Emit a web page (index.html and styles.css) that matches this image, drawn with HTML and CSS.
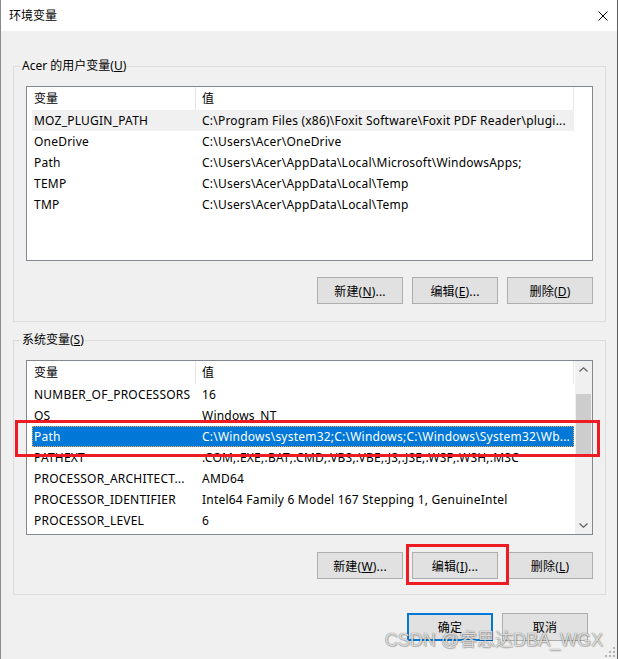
FILE: index.html
```html
<!DOCTYPE html>
<html lang="zh-CN">
<head>
    <meta charset="UTF-8">
    <title>环境变量</title>
    <link rel="stylesheet" href="styles.css">
</head>
<body>
    <div class="window">
        <div class="titlebar">
            <span class="title">环境变量</span>
            <svg class="close" width="10" height="10" viewBox="0 0 10 10">
                <path d="M0.5 0.5L9.5 9.5M9.5 0.5L0.5 9.5" stroke="#000" stroke-width="1" fill="none"/>
            </svg>
        </div>

        <div class="content">
            <fieldset class="group group-user">
                <legend>Acer 的用户变量(<u>U</u>)</legend>
                <div class="list">
                    <div class="list-main">
                        <div class="list-head"><span class="h1">变量</span><span class="h2">值</span></div>
                        <div class="row row-inactive"><span class="c1">MOZ_PLUGIN_PATH</span><span class="c2">C:\Program Files (x86)\Foxit Software\Foxit PDF Reader\plugi...</span></div>
                        <div class="row"><span class="c1">OneDrive</span><span class="c2">C:\Users\Acer\OneDrive</span></div>
                        <div class="row"><span class="c1">Path</span><span class="c2">C:\Users\Acer\AppData\Local\Microsoft\WindowsApps;</span></div>
                        <div class="row"><span class="c1">TEMP</span><span class="c2">C:\Users\Acer\AppData\Local\Temp</span></div>
                        <div class="row"><span class="c1">TMP</span><span class="c2">C:\Users\Acer\AppData\Local\Temp</span></div>
                    </div>
                </div>
                <div class="buttons">
                    <button class="btn">新建(<u>N</u>)...</button>
                    <button class="btn">编辑(<u>E</u>)...</button>
                    <button class="btn">删除(<u>D</u>)</button>
                </div>
            </fieldset>

            <fieldset class="group group-system">
                <legend>系统变量(<u>S</u>)</legend>
                <div class="list">
                    <div class="list-main">
                        <div class="list-head"><span class="h1">变量</span><span class="h2">值</span></div>
                        <div class="row"><span class="c1">NUMBER_OF_PROCESSORS</span><span class="c2">16</span></div>
                        <div class="row"><span class="c1">OS</span><span class="c2">Windows_NT</span></div>
                        <div class="row row-selected"><span class="c1">Path</span><span class="c2">C:\Windows\system32;C:\Windows;C:\Windows\System32\Wb...</span></div>
                        <div class="row"><span class="c1">PATHEXT</span><span class="c2">.COM;.EXE;.BAT;.CMD;.VBS;.VBE;.JS;.JSE;.WSF;.WSH;.MSC</span></div>
                        <div class="row"><span class="c1">PROCESSOR_ARCHITECT...</span><span class="c2">AMD64</span></div>
                        <div class="row"><span class="c1">PROCESSOR_IDENTIFIER</span><span class="c2">Intel64 Family 6 Model 167 Stepping 1, GenuineIntel</span></div>
                        <div class="row"><span class="c1">PROCESSOR_LEVEL</span><span class="c2">6</span></div>
                    </div>
                    <div class="scrollbar">
                        <div class="sb-btn">
                            <svg width="9" height="5" viewBox="0 0 9 5"><path d="M0.5 4.5L4.5 0.8L8.5 4.5" stroke="#606060" stroke-width="1.2" fill="none"/></svg>
                        </div>
                        <div class="sb-track"><div class="sb-thumb"></div></div>
                        <div class="sb-btn">
                            <svg width="9" height="5" viewBox="0 0 9 5"><path d="M0.5 0.5L4.5 4.2L8.5 0.5" stroke="#606060" stroke-width="1.2" fill="none"/></svg>
                        </div>
                    </div>
                </div>
                <div class="buttons">
                    <button class="btn">新建(<u>W</u>)...</button>
                    <button class="btn">编辑(<u>I</u>)...</button>
                    <button class="btn">删除(<u>L</u>)</button>
                </div>
            </fieldset>

            <div class="footer">
                <button class="btn btn-default">确定</button>
                <button class="btn">取消</button>
            </div>
        </div>

        <!-- annotations drawn over the dialog -->
        <div class="mark mark-row"></div>
        <div class="mark mark-btn"></div>
        <div class="watermark">CSDN @睿思达DBA_WGX</div>
        <svg class="grip" width="10" height="10" viewBox="0 0 10 10">
            <rect x="8" y="0" width="2" height="2" fill="#b4b4b4"/>
            <rect x="4" y="4" width="2" height="2" fill="#b4b4b4"/>
            <rect x="8" y="4" width="2" height="2" fill="#b4b4b4"/>
            <rect x="0" y="8" width="2" height="2" fill="#b4b4b4"/>
            <rect x="4" y="8" width="2" height="2" fill="#b4b4b4"/>
            <rect x="8" y="8" width="2" height="2" fill="#b4b4b4"/>
        </svg>
    </div>
</body>
</html>
```

FILE: styles.css
```css
* {
    box-sizing: border-box;
}
body {
    margin: 0;
    background: #f0f0f0;
    font-family: "Noto Sans", "Noto Sans CJK SC", sans-serif;
    font-size: 12px;
    color: #000;
}
.window {
    position: relative;
    width: 618px;
    height: 659px;
    background: #f0f0f0;
    border-left: 1px solid #8a8a8a;
    border-right: 1px solid #5c5c5c;
    overflow: hidden;
}
.titlebar {
    height: 31px;
    background: #fff;
    display: flex;
    align-items: center;
    justify-content: space-between;
    padding: 0 9px 0 8px;
}
.title {
    line-height: 16px;
}
.content {
    padding: 0 11px 0 12px;
}
.group {
    margin: 27px 0 0;
    padding: 12px 12px 17px 12px;
    border: 1px solid #dcdcdc;
    min-width: 0;
}
.group-system {
    margin-top: 10px;
    padding-bottom: 15px;
}
.group legend {
    padding: 0 1px;
    margin-left: -5px;
    line-height: 16px;
}
.list {
    display: flex;
    height: 175px;
    background: #fff;
    border: 1px solid #828790;
}
.list-main {
    flex: 1;
    overflow: hidden;
}
.list-head {
    display: flex;
    height: 23px;
    line-height: 23px;
}
.list-head .h1 {
    width: 169px;
    padding-left: 7px;
    border-right: 1px solid #e5e5e5;
}
.list-head .h2 {
    width: 378px;
    padding-left: 6px;
    border-right: 1px solid #e5e5e5;
}
.row {
    display: flex;
    width: 542px;
    height: 21px;
    margin-left: 5px;
    line-height: 21px;
    letter-spacing: 0.22px;
    white-space: nowrap;
}
.row .c1 {
    width: 168px;
    padding-left: 2px;
    overflow: hidden;
}
.row .c2 {
    flex: 1;
    padding-left: 2px;
    overflow: hidden;
}
.row-inactive {
    background: #f0f0f0;
}
.row-selected {
    background: #0078d7;
    color: #fff;
    outline: 1px dotted #f3a94f;
    outline-offset: -1px;
}
.scrollbar {
    width: 17px;
    display: flex;
    flex-direction: column;
    background: #f0f0f0;
}
.sb-btn {
    height: 17px;
    display: flex;
    align-items: center;
    justify-content: center;
}
.sb-track {
    flex: 1;
    padding-top: 16px;
}
.sb-thumb {
    height: 60px;
    margin: 0 1px;
    background: #cdcdcd;
}
.buttons {
    display: flex;
    justify-content: flex-end;
    gap: 9px;
    margin-top: 16px;
}
.group-system .buttons {
    margin-top: 17px;
}
.btn {
    width: 86px;
    height: 27px;
    padding: 0;
    font-family: inherit;
    font-size: 12px;
    letter-spacing: 0.2px;
    color: #000;
    background: #e1e1e1;
    border: 1px solid #adadad;
}
.footer {
    display: flex;
    justify-content: flex-end;
    gap: 9px;
    margin: 18px 18px 0 0;
}
.footer .btn {
    height: 28px;
}
.btn-default {
    border: 2px solid #0078d7;
}
.mark {
    position: absolute;
    border: 3px solid #ed1c24;
}
.mark-row {
    left: 14px;
    top: 420px;
    width: 585px;
    height: 37px;
}
.mark-btn {
    left: 405px;
    top: 544px;
    width: 103px;
    height: 41px;
}
.watermark {
    position: absolute;
    top: 630px;
    right: 14px;
    line-height: 20px;
    font-family: "Liberation Sans", "Noto Sans CJK SC", sans-serif;
    font-size: 18px;
    color: rgba(255, 255, 255, 0.8);
    text-shadow: 0 0 1px rgba(0, 0, 0, 0.7), 1px 1px 1px rgba(0, 0, 0, 0.2);
    white-space: nowrap;
}
.grip {
    position: absolute;
    right: 2px;
    bottom: 2px;
}
```
